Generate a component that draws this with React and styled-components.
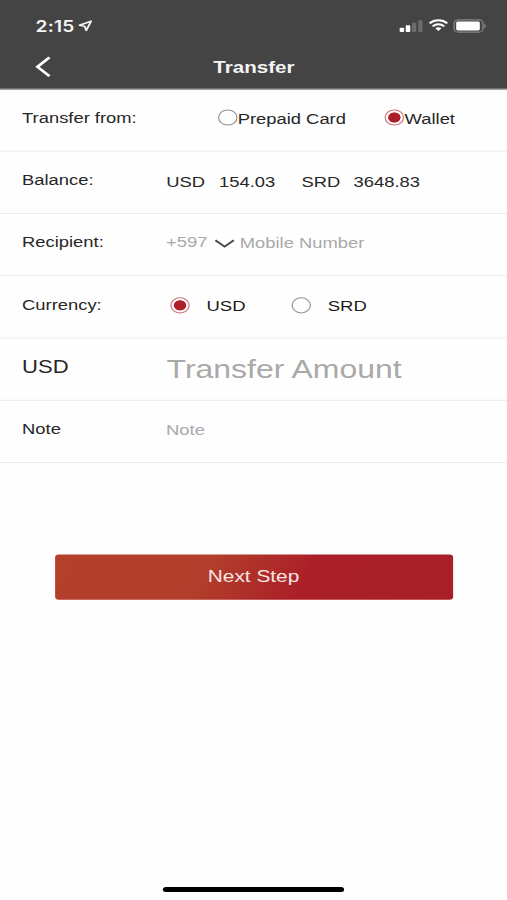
import React, { useState } from 'react'
import styled, { createGlobalStyle } from 'styled-components'

const SCREEN_W = 414;
const SCREEN_H = 896;

function StatusBar() {
    return (
      <StatusWrapper>
        <Clock>2:15</Clock>
        <svg className="location" width="12" height="12" viewBox="0 0 12 12">
          <path
            d="M10.4 1.2 L0.8 5.2 L5 6.2 L6.4 10.2 Z"
            fill="none"
            stroke="#f2f2f2"
            strokeWidth="1.6"
            strokeLinejoin="round"
          />
        </svg>
        <svg className="signal" width="20" height="12" viewBox="0 0 20 12">
          <rect x="0.3" y="7.6" width="3.7" height="4.2" rx="0.8" fill="#fff" />
          <rect x="5.3" y="5.2" width="3.7" height="6.6" rx="0.8" fill="#fff" />
          <rect x="10.4" y="2.6" width="3.5" height="9.2" rx="0.8" fill="#6c6c6c" />
          <rect x="15.5" y="0.2" width="3.5" height="11.6" rx="0.8" fill="#6c6c6c" />
        </svg>
        <svg className="wifi" width="16" height="12" viewBox="0 0 16 12">
          <g fill="none" stroke="#fff" strokeWidth="2">
            <path d="M0.8 4.3 C4.8 0.1 11.2 0.1 15.2 4.3" />
            <path d="M3.3 7.3 C6 4.5 10 4.5 12.7 7.3" />
          </g>
          <path d="M5.5 9.2 C6.9 7.8 9.1 7.8 10.5 9.2 L8 11.9 Z" fill="#fff" />
        </svg>
        <svg className="battery" width="28" height="14" viewBox="0 0 28 14">
          <rect x="0.8" y="0.8" width="23.6" height="12.2" rx="3.4" fill="none" stroke="#858585" strokeWidth="1.1" />
          <rect x="2.5" y="2.5" width="19.3" height="8.8" rx="1.4" fill="#fff" />
          <path d="M25.4 4.8 C27.2 5.4 27.2 8.4 25.4 9 Z" fill="#858585" />
        </svg>
      </StatusWrapper>
    );
}

function NavBar() {
    return (
      <NavWrapper>
        <BackButton aria-label="Back">
          <svg width="14" height="21" viewBox="0 0 14 21">
            <path d="M12.4 1.2 L2.6 10.5 L12.4 19.8" fill="none" stroke="#fff" strokeWidth="2.5" />
          </svg>
        </BackButton>
        <Title>Transfer</Title>
      </NavWrapper>
    );
}

function RadioOption({ name, label, gap, checked, onSelect }) {
    return (
      <Option $gap={gap}>
        <Radio type="radio" name={name} checked={checked} onChange={onSelect} />
        <span>{label}</span>
      </Option>
    );
}

export default function App() {
    const [source, setSource] = useState('wallet');
    const [currency, setCurrency] = useState('USD');

    return (
      <>
        <GlobalStyle />
        <Screen>
          <Header>
            <StatusBar />
            <NavBar />
          </Header>
          <Row>
            <Label>Transfer from:</Label>
            <SourceGroup>
              <RadioOption
                name="source"
                label="Prepaid Card"
                gap={0.5}
                checked={source === 'card'}
                onSelect={() => setSource('card')}
              />
              <RadioOption
                name="source"
                label="Wallet"
                gap={0.5}
                checked={source === 'wallet'}
                onSelect={() => setSource('wallet')}
              />
            </SourceGroup>
          </Row>
          <Row>
            <Label>Balance:</Label>
            <Balances>
              <span>USD</span>
              <span>154.03</span>
              <span>SRD</span>
              <span>3648.83</span>
            </Balances>
          </Row>
          <Row>
            <Label>Recipient:</Label>
            <Recipient>
              <Prefix>
                +597
                <svg width="17" height="10" viewBox="0 0 17 10">
                  <path d="M0.9 1.2 L8.4 7.5 L15.9 1.2" fill="none" stroke="#4a4a4a" strokeWidth="1.8" />
                </svg>
              </Prefix>
              <Field $size={15} $top={19} placeholder="Mobile Number" />
            </Recipient>
          </Row>
          <Row>
            <Label $top={18.6}>Currency:</Label>
            <CurrencyGroup>
              <RadioOption
                name="currency"
                label="USD"
                gap={13.5}
                checked={currency === 'USD'}
                onSelect={() => setCurrency('USD')}
              />
              <RadioOption
                name="currency"
                label="SRD"
                gap={13.5}
                checked={currency === 'SRD'}
                onSelect={() => setCurrency('SRD')}
              />
            </CurrencyGroup>
          </Row>
          <Row>
            <Label $size={18} $top={17.5}>{currency}</Label>
            <Field $size={26.1} $line={30} $top={15} $indent={1} placeholder="Transfer Amount" />
          </Row>
          <Row>
            <Label $size={15} $top={18.4}>Note</Label>
            <Field $size={15.1} $top={19} $indent={0.5} placeholder="Note" />
          </Row>
          <NextButton>Next Step</NextButton>
          <HomeIndicator />
        </Screen>
      </>
    );
}

const GlobalStyle = createGlobalStyle`
    * {
        box-sizing: border-box;
    }
    body {
        margin: 0;
        overflow: hidden;
        background: #fefefe;
    }
    input, button {
        font-family: inherit;
        border: 0;
        padding: 0;
        margin: 0;
        background: none;
        outline: none;
    }
`;

const Screen = styled.main`
    display: flex;
    flex-direction: column;
    width: ${SCREEN_W}px;
    height: ${SCREEN_H}px;
    background: #fefefe;
    color: #262626;
    font-family: "Liberation Sans", Arial, sans-serif;
    font-size: 15px;
    line-height: 20px;
    transform: scale(${507 / SCREEN_W}, ${900 / SCREEN_H});
    transform-origin: 0 0;
`;

const Header = styled.header`
    flex: none;
    height: 89px;
    background: #444;
    border-bottom: 1px solid #8c8c8c;
`;

const StatusWrapper = styled.div`
    display: flex;
    height: 44px;
    padding: 19px 0 0 29px;
    .location {
        margin: 0.8px 0 0 2.6px;
    }
    .signal {
        margin: 0.5px 0 0 auto;
    }
    .wifi {
        margin: 0 0 0 4px;
    }
    .battery {
        margin: -0.5px 16px 0 4px;
    }
`;

const Clock = styled.span`
    width: 32.5px;
    margin-top: -2.5px;
    color: #f4f4f4;
    font-family: Inter, sans-serif;
    font-size: 15.6px;
    font-weight: 600;
    letter-spacing: 0.2px;
`;

const NavWrapper = styled.nav`
    display: grid;
    grid-template-columns: 60px 1fr 60px;
    height: 44px;
`;

const BackButton = styled.button`
    display: flex;
    padding: 12.3px 0 0 28px;
`;

const Title = styled.h1`
    margin: 14px 0 0 0.6px;
    color: #f4f4f4;
    font-size: 16.8px;
    font-weight: bold;
    text-align: center;
`;

const Row = styled.section`
    flex: none;
    display: grid;
    grid-template-columns: 117px 1fr;
    align-items: start;
    height: 62px;
    padding-left: 18px;
    border-bottom: 1px solid #ebebeb;
`;

const Label = styled.span`
    padding-top: ${({ $top = 18 }) => $top}px;
    font-size: ${({ $size = 15 }) => $size}px;
    white-space: nowrap;
`;

const Option = styled.label`
    display: flex;
    gap: ${({ $gap }) => $gap}px;
    font-size: 15px;
    white-space: nowrap;
`;

const Radio = styled.input`
    appearance: none;
    flex: none;
    width: 15.8px;
    height: 16px;
    margin-top: 1.3px;
    border: 1.2px solid ${({ checked }) => (checked ? '#d0737b' : '#949494')};
    border-radius: 50%;
    background: ${({ checked }) => (checked ? 'radial-gradient(circle, #ae1f29 4.7px, transparent 5.4px)' : 'none')};
`;

const SourceGroup = styled.div`
    display: grid;
    grid-template-columns: 136.3px auto;
    justify-content: start;
    padding: 19px 0 0 42.8px;
    input {
        margin-top: 0.6px;
    }
`;

const Balances = styled.div`
    display: grid;
    grid-template-columns: 43.2px 67.3px 42.5px auto;
    justify-content: start;
    padding: 19.6px 0 0 0.7px;
    font-size: 15px;
`;

const Recipient = styled.div`
    display: grid;
    grid-template-columns: 60.8px 1fr;
`;

const Prefix = styled.span`
    display: flex;
    padding: 18px 0 0 0.5px;
    color: #a8a8a8;
    font-size: 15.1px;
    svg {
        margin: 6.8px 0 0 5.7px;
    }
`;

const CurrencyGroup = styled.div`
    display: grid;
    grid-template-columns: 99px auto;
    justify-content: start;
    padding: 20px 0 0 4.3px;
    color: #1c1c1c;
    label {
        font-size: 15.1px;
    }
`;

const Field = styled.input`
    width: 100%;
    height: ${({ $line = 20 }) => $line}px;
    margin-top: ${({ $top }) => $top}px;
    padding-left: ${({ $indent = 0 }) => $indent}px;
    font-size: ${({ $size }) => $size}px;
    line-height: ${({ $line = 20 }) => $line}px;
    color: #262626;
    &::placeholder {
        color: #a9a9a9;
        opacity: 1;
    }
`;

const NextButton = styled.button`
    flex: none;
    width: 325px;
    height: 45.5px;
    margin: 90.7px 0 0 44.5px;
    padding-bottom: 0.4px;
    border-radius: 3px;
    background: linear-gradient(116deg, #b3402b 0%, #b23e2b 38%, #ab2028 62%, #a81f27 100%);
    color: #f9e6e2;
    font-size: 17px;
`;

const HomeIndicator = styled.div`
    width: 148px;
    height: 5px;
    margin: auto auto 8px;
    border-radius: 3px;
    background: #000;
`;
